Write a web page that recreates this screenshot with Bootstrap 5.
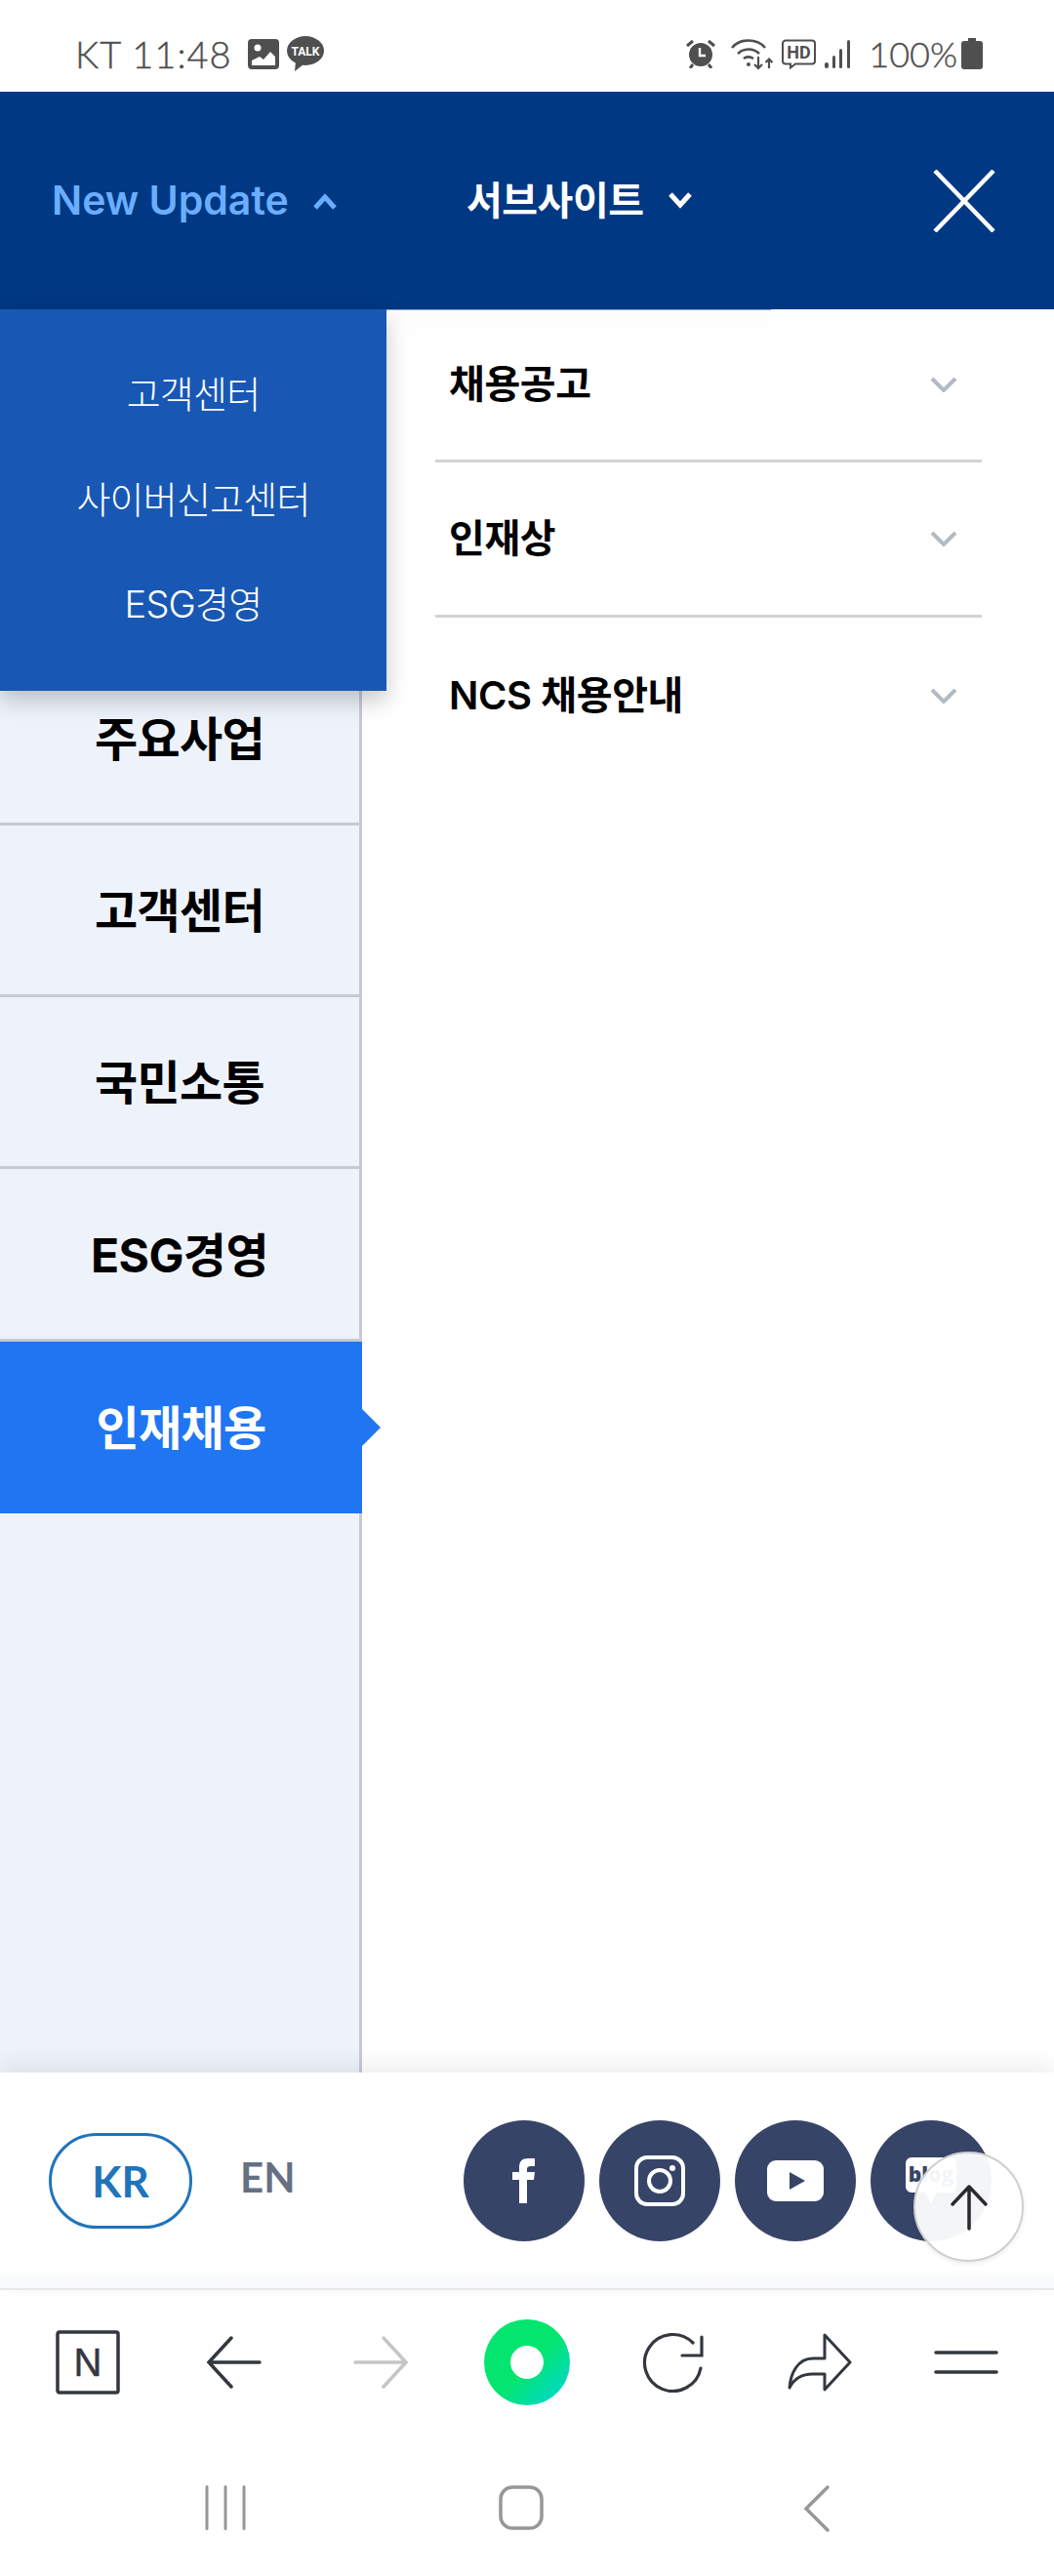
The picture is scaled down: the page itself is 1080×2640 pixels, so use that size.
<!DOCTYPE html>
<html lang="ko">
<head>
    <meta charset="UTF-8">
    <meta name="viewport" content="width=device-width, initial-scale=1.0">
    <title>인재채용 메뉴</title>
    <link href="https://cdn.jsdelivr.net/npm/bootstrap@5.3.0/dist/css/bootstrap.min.css" rel="stylesheet">
    <style>
        html, body { height: 100%; }
        body {
            font-family: Inter, "Noto Sans CJK KR", sans-serif;
            background: #fff;
            overflow: hidden;
        }
        .app-page { width: 1080px; height: 2640px; position: relative; }

        /* status bar */
        .status-bar { height: 94px; padding: 0 73px 0 77px; color: #4f4f4f; }
        .status-text { font-family: Lato, sans-serif; font-weight: 300; font-size: 38px; line-height: 1; letter-spacing: 1px; -webkit-text-stroke: .4px #4f4f4f; }
        .status-pct { font-size: 36px; letter-spacing: 0; margin-left: 18px; }

        /* header */
        .top-head { height: 223px; background: #003883; padding: 0 60px 0 53px; }
        .head-link { font-weight: 600; line-height: 1; }
        .head-update { width: 425px; color: #6aaeff; font-size: 41px; }
        .head-sub { color: #fff; font-size: 40px; letter-spacing: -.5px; }

        /* overlays under the header */
        .update-drop {
            position: absolute; left: 0; top: 317px; width: 396px; height: 391px; z-index: 3;
            background: #1858b4; padding-top: 60px;
            box-shadow: 0 10px 22px rgba(0, 0, 0, .22);
        }
        .update-drop a {
            display: block; height: 107.5px; line-height: 54px; text-align: center;
            color: #fff; font-size: 38px; font-weight: 300; letter-spacing: -.8px; text-decoration: none;
        }
        .sub-drop {
            position: absolute; left: 396px; top: 317px; width: 394px; height: 1px; z-index: 2;
            background: #8fabd8; box-shadow: 0 8px 22px rgba(0, 0, 0, .25);
        }

        /* menu body */
        .menu-wrap { height: 1807px; }
        .menu-side { width: 371px; background: #eef3fb; border-right: 3px solid #c5cad5; flex: none; }
        .side-gap { height: 352.6px; }
        .side-item {
            height: 176.3px; border-bottom: 3px solid #c5cad5; color: #000; padding-top: 3px;
            font-size: 48px; font-weight: 700; letter-spacing: -.6px; text-decoration: none;
        }
        .side-item.on {
            background: #1f75f2; color: #fff; border-bottom: 0; width: 371px; position: relative;
            height: 176px;
        }
        .side-item.on::after {
            content: ""; position: absolute; left: 100%; top: 69px;
            border-left: 19px solid #1f75f2; border-top: 19px solid transparent; border-bottom: 19px solid transparent;
        }
        .menu-main { padding: 0 74px 0 75px; }
        .main-item { height: 159px; border-bottom: 3px solid #d3d3d3; padding: 0 25px 0 14px; color: #000; font-size: 40px; font-weight: 600; letter-spacing: -.4px; }
        .main-item:first-child { height: 157px; }
        .main-item:last-child { border-bottom: 0; }

        /* footer */
        .foot-bar {
            height: 223px; background: linear-gradient(#fff 90%, #f8f9fb); border-bottom: 2px solid #e6e7ea;
            padding: 0 64px 0 50px; position: relative; z-index: 1;
            box-shadow: 0 -8px 22px rgba(0, 0, 0, .07);
        }
        .lang-on {
            width: 147px; height: 98px; border: 3px solid #1f74bb; border-radius: 49px; color: #1f74bb;
            font-family: Lato, sans-serif; font-weight: 700; font-size: 44px; text-decoration: none;
        }
        .lang-off { margin: 0 0 6px 49px; color: #667084; font-family: Lato, sans-serif; font-weight: 700; font-size: 42px; text-decoration: none; }
        .social-row { gap: 15px; }
        .social-dot { width: 124px; height: 124px; border-radius: 50%; background: #364567; }
        .blog-text { font-family: "Open Sans", sans-serif; font-weight: 800; font-size: 21px; fill: #364567; }
        .to-top {
            position: absolute; left: 936px; top: 2205px; width: 113px; height: 113px; z-index: 4;
            border-radius: 50%; border: 2px solid #cfcfcf; background: rgba(255, 255, 255, .95);
            box-shadow: 0 2px 5px rgba(0, 0, 0, .08);
        }

        /* browser bar and system nav */
        .browser-bar { height: 200px; padding: 0 15px 52px; }
        .browser-cell { width: 150px; }
        .n-mark { font-family: "Liberation Sans", sans-serif; font-size: 40px; fill: #33383f; stroke: #33383f; stroke-width: .5px; }
        .nav-bar { height: 93px; padding: 0 91px 0 79px; }
        .nav-cell { width: 303px; }
    </style>
</head>
<body>
<div class="app-page d-flex flex-column">

    <div class="status-bar d-flex align-items-center flex-shrink-0 pt-3">
        <span class="status-text">KT 11:48</span>
        <svg class="ms-3" width="32" height="31" viewBox="0 0 32 31"><rect width="32" height="31" rx="4" fill="#4f4f4f"/><circle cx="10" cy="9" r="3.5" fill="#fff"/><path d="M4 27v-5l8-4 4 3 7-8 5 5v9z" fill="#fff"/></svg>
        <svg class="ms-2" width="38" height="36" viewBox="0 0 38 36"><ellipse cx="19" cy="15" rx="19" ry="15" fill="#4f4f4f"/><path d="M9 26l-1 10 9-7z" fill="#4f4f4f"/><text x="19" y="20" text-anchor="middle" font-family="Roboto, sans-serif" font-weight="700" font-size="12" fill="#fff">TALK</text></svg>

        <div class="ms-auto d-flex align-items-center">
            <svg width="30" height="30" viewBox="0 0 30 30"><circle cx="15" cy="16" r="12" fill="#4f4f4f"/><path d="M14 9v8h6" fill="none" stroke="#fff" stroke-width="2.4"/><path d="M1 7l6-5M29 7l-6-5M7 26l-3 4M23 26l3 4" stroke="#4f4f4f" stroke-width="3"/></svg>
            <svg class="ms-3" width="44" height="34" viewBox="0 0 44 34" fill="none" stroke="#4f4f4f" stroke-width="2.6"><path d="M1 11C9 1 27 1 35 11M7 17c6-6 16-6 22 0M13 22c3-2 7-2 10 0"/><circle cx="18" cy="28" r="2" fill="#4f4f4f" stroke="none"/><path d="M28 20v12M24 28l4 4 4-4M39 32V23M35.500 26l3.500-3.500 3.500 3.500" stroke-width="2.200"/></svg>
            <svg class="ms-2" width="35" height="31" viewBox="0 0 35 31"><path d="M4 1.500h27a3 3 0 0 1 3 3v18a3 3 0 0 1-3 3H14l-5 4v-4H4a3 3 0 0 1-3-3v-18a3 3 0 0 1 3-3z" fill="none" stroke="#4f4f4f" stroke-width="2"/><text x="17.500" y="20" text-anchor="middle" font-family="Roboto, sans-serif" font-weight="700" font-size="18" fill="#4f4f4f">HD</text></svg>
            <svg class="ms-2" width="28" height="30" viewBox="0 0 28 30" fill="#4f4f4f"><rect x="1" y="24" width="4" height="6" rx="2"/><rect x="9" y="17" width="3" height="13" rx="1.500"/><rect x="16" y="10" width="3" height="20" rx="1.500"/><rect x="24" y="1" width="3" height="29" rx="1.500"/></svg>
            <span class="status-text status-pct">100%</span>
            <svg class="ms-1" width="22" height="32" viewBox="0 0 22 32"><path d="M7 0h8v3h4a3 3 0 0 1 3 3v23a3 3 0 0 1-3 3H3a3 3 0 0 1-3-3V6a3 3 0 0 1 3-3h4z" fill="#4f4f4f"/></svg>
        </div>
    </div>

    <header class="top-head d-flex align-items-center flex-shrink-0">
        <div class="head-link head-update d-flex align-items-center">
            <span>New Update</span>
            <svg class="ms-4" width="26" height="20" viewBox="0 0 26 20"><path d="M3 17l10-11 10 11" fill="none" stroke="#6aaeff" stroke-width="5"/></svg>
        </div>
        <div class="head-link head-sub d-flex align-items-center">
            <span>서브사이트</span>
            <svg class="ms-4" width="26" height="20" viewBox="0 0 26 20"><path d="M3 3l10 11 10-11" fill="none" stroke="#fff" stroke-width="5"/></svg>
        </div>
        <svg class="ms-auto" width="64" height="64" viewBox="0 0 64 64"><path d="M2 1l60 62M62 1L2 63" fill="none" stroke="#fff" stroke-width="4.500"/></svg>
    </header>

    <div class="update-drop">
        <a href="#">고객센터</a>
        <a href="#">사이버신고센터</a>
        <a href="#">ESG경영</a>
    </div>
    <div class="sub-drop"></div>

    <div class="menu-wrap d-flex flex-shrink-0">
        <nav class="menu-side">
            <div class="side-gap"></div>
            <a class="side-item d-flex align-items-center justify-content-center" href="#">주요사업</a>
            <a class="side-item d-flex align-items-center justify-content-center" href="#">고객센터</a>
            <a class="side-item d-flex align-items-center justify-content-center" href="#">국민소통</a>
            <a class="side-item d-flex align-items-center justify-content-center" href="#">ESG경영</a>
            <a class="side-item on d-flex align-items-center justify-content-center" href="#">인재채용</a>
        </nav>
        <div class="menu-main flex-grow-1">
            <div class="main-item d-flex align-items-center justify-content-between">
                <span>채용공고</span>
                <svg width="28" height="16" viewBox="0 0 28 16"><path d="M2 2l12 12L26 2" fill="none" stroke="#b4bac2" stroke-width="4"/></svg>
            </div>
            <div class="main-item d-flex align-items-center justify-content-between">
                <span>인재상</span>
                <svg width="28" height="16" viewBox="0 0 28 16"><path d="M2 2l12 12L26 2" fill="none" stroke="#b4bac2" stroke-width="4"/></svg>
            </div>
            <div class="main-item d-flex align-items-center justify-content-between">
                <span>NCS 채용안내</span>
                <svg width="28" height="16" viewBox="0 0 28 16"><path d="M2 2l12 12L26 2" fill="none" stroke="#b4bac2" stroke-width="4"/></svg>
            </div>
        </div>
    </div>

    <footer class="foot-bar d-flex align-items-center flex-shrink-0">
        <a class="lang-on d-flex align-items-center justify-content-center" href="#">KR</a>
        <a class="lang-off" href="#">EN</a>
        <div class="social-row ms-auto d-flex">
            <div class="social-dot d-flex align-items-center justify-content-center">
                <svg width="24" height="46" viewBox="0 0 24 46"><path d="M7 46V22H0v-8h7V9c0-6 3-9 9-9h7v8h-4c-3 0-4 1-4 3v3h8l-1 8h-7v24z" fill="#fff"/></svg>
            </div>
            <div class="social-dot d-flex align-items-center justify-content-center">
                <svg width="52" height="52" viewBox="0 0 52 52" fill="none" stroke="#fff" stroke-width="4"><rect x="2" y="2" width="48" height="48" rx="11"/><circle cx="26" cy="26" r="11"/><circle cx="39" cy="13" r="3" fill="#fff" stroke="none"/></svg>
            </div>
            <div class="social-dot d-flex align-items-center justify-content-center">
                <svg width="58" height="42" viewBox="0 0 58 42"><rect width="58" height="42" rx="9" fill="#fff"/><path d="M23 12l16 9-16 9z" fill="#364567"/></svg>
            </div>
            <div class="social-dot d-flex align-items-center justify-content-center">
                <svg width="52" height="48" viewBox="0 0 52 48"><path d="M6 0h40a6 6 0 0 1 6 6v24a6 6 0 0 1-6 6H32l-6 11-6-11H6a6 6 0 0 1-6-6V6a6 6 0 0 1 6-6z" fill="#fff"/><text x="26" y="25" text-anchor="middle" class="blog-text">blog</text></svg>
            </div>
        </div>
    </footer>

    <a class="to-top d-flex align-items-center justify-content-center" href="#">
        <svg width="40" height="48" viewBox="0 0 40 48"><path d="M20 46V3M3 21L20 3l17 18" fill="none" stroke="#2a2a2e" stroke-width="3.500" stroke-linecap="round" stroke-linejoin="round"/></svg>
    </a>

    <div class="browser-bar d-flex align-items-center flex-shrink-0">
        <div class="browser-cell d-flex justify-content-center">
            <svg width="66" height="66" viewBox="0 0 66 66"><rect x="2" y="2" width="62" height="62" rx="2" fill="none" stroke="#33383f" stroke-width="3.500"/><text x="33" y="47" text-anchor="middle" class="n-mark">N</text></svg>
        </div>
        <div class="browser-cell d-flex justify-content-center">
            <svg width="56" height="54" viewBox="0 0 56 54"><path d="M54 27H2M25 2L2 27l23 25" fill="none" stroke="#33383f" stroke-width="3.500" stroke-linecap="round"/></svg>
        </div>
        <div class="browser-cell d-flex justify-content-center">
            <svg width="56" height="54" viewBox="0 0 56 54"><path d="M2 27h52M31 2l23 25-23 25" fill="none" stroke="#c6c6c6" stroke-width="3.500" stroke-linecap="round"/></svg>
        </div>
        <div class="browser-cell d-flex justify-content-center">
            <svg width="88" height="88" viewBox="0 0 88 88"><defs><linearGradient id="naverGreen" x1="0.15" y1="0.15" x2="0.9" y2="0.9"><stop offset=".5" stop-color="#03e56e"/><stop offset="1" stop-color="#00d8c8"/></linearGradient></defs><circle cx="44" cy="44" r="44" fill="url(#naverGreen)"/><circle cx="44" cy="44" r="17" fill="#fff"/></svg>
        </div>
        <div class="browser-cell d-flex justify-content-center">
            <svg width="64" height="62" viewBox="0 0 64 62" fill="none" stroke="#33383f" stroke-width="3.200" stroke-linecap="round"><path d="M60 37A29 29 0 1 1 52 11"/><path d="M61 5v19H41"/></svg>
        </div>
        <div class="browser-cell d-flex justify-content-center">
            <svg width="66" height="60" viewBox="0 0 66 60"><path d="M38 2l26 28-26 28V42H26c-12 0-20 6-24 14 1-14 8-30 24-30h12z" fill="none" stroke="#33383f" stroke-width="3" stroke-linejoin="round"/></svg>
        </div>
        <div class="browser-cell d-flex justify-content-center">
            <svg width="66" height="26" viewBox="0 0 66 26"><path d="M2 3h62M2 23h62" stroke="#33383f" stroke-width="3.600" stroke-linecap="round"/></svg>
        </div>
    </div>

    <div class="nav-bar d-flex align-items-start flex-shrink-0">
        <div class="nav-cell d-flex justify-content-center">
            <svg width="42" height="46" viewBox="0 0 42 46"><path d="M2 1.500v43M21 1.500v43M40 1.500v43" stroke="#979797" stroke-width="3" stroke-linecap="round"/></svg>
        </div>
        <div class="nav-cell d-flex justify-content-center">
            <svg width="46" height="46" viewBox="0 0 46 46"><rect x="2" y="2" width="42" height="42" rx="12" fill="none" stroke="#979797" stroke-width="3.500"/></svg>
        </div>
        <div class="nav-cell d-flex justify-content-center">
            <svg width="26" height="48" viewBox="0 0 26 48"><path d="M24 2L2 24l22 22" fill="none" stroke="#979797" stroke-width="3.500" stroke-linecap="round"/></svg>
        </div>
    </div>
</div>
<script src="https://cdn.jsdelivr.net/npm/bootstrap@5.3.0/dist/js/bootstrap.bundle.min.js"></script>
</body>
</html>
